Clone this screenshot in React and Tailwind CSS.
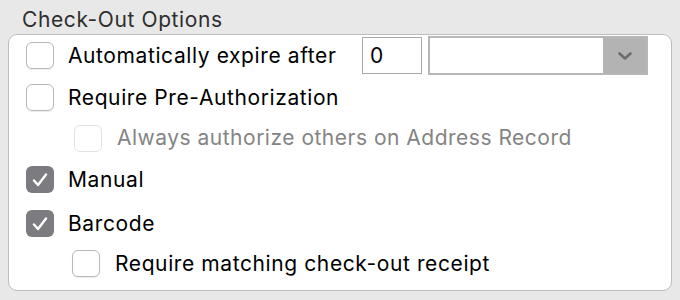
import React from "react";

function Box({ checked = false, disabled = false }) {
  if (checked) {
    return (
      <div className="w-[28px] h-[27px] shrink-0 rounded-[6px] bg-[#7c7c80] flex items-center justify-center">
        <svg width="16" height="14" viewBox="0 0 16 14" fill="none">
          <path d="M2 7.5 L6 12 L14 1.5" stroke="#ffffff" strokeWidth="2.4" strokeLinecap="round" strokeLinejoin="round" />
        </svg>
      </div>
    );
  }
  return (
    <div
      className={
        disabled
          ? "w-[28px] h-[27px] shrink-0 rounded-[6px] bg-white border border-[#e2e2e2]"
          : "w-[28px] h-[27px] shrink-0 rounded-[6px] bg-white border border-[#b9b9b9] shadow-[0_1px_1px_rgba(0,0,0,0.08)]"
      }
    />
  );
}

export default function App() {
  return (
    <div className="w-[680px] h-[300px] bg-[#e8e8e8] text-[21px] tracking-[0.6px] font-['Inter',sans-serif]">
      <div className="h-[34px] pl-[22px] pt-[8px] text-[#2e2e2e] leading-[24px]">Check-Out Options</div>

      <div className="mx-[8px] w-[664px] h-[257px] bg-white border border-[#bdbdbd] rounded-[9px] flex flex-col">
        {/* Automatically expire */}
        <div className="h-[41px] flex items-center pl-[17px]">
          <Box />
          <span className="ml-[14px] text-black">Automatically expire after</span>
          <div className="ml-auto mr-[23px] flex items-center gap-[6px]">
            <div className="w-[60px] h-[37px] border border-[#a8a8a8] flex items-center pl-[7px] text-black">0</div>
            <div className="w-[220px] h-[39px] border-2 border-[#b7b7b7] flex">
              <div className="flex-1 bg-white" />
              <div className="w-[43px] bg-[#b3b3b3] flex items-center justify-center">
                <svg width="16" height="10" viewBox="0 0 16 10" fill="none">
                  <path d="M2.5 2.5 L8 7.5 L13.5 2.5" stroke="#6d6d6d" strokeWidth="2.6" strokeLinecap="round" strokeLinejoin="round" />
                </svg>
              </div>
            </div>
          </div>
        </div>

        {/* Require Pre-Authorization */}
        <div className="h-[43px] flex items-center pl-[17px]">
          <Box />
          <span className="ml-[14px] text-black">Require Pre-Authorization</span>
        </div>

        {/* Always authorize others */}
        <div className="h-[38px] flex items-center pl-[65px]">
          <Box disabled />
          <span className="ml-[15px] text-[#848484] tracking-[0.5px]">Always authorize others on Address Record</span>
        </div>

        {/* Manual */}
        <div className="h-[45px] flex items-center pl-[17px]">
          <Box checked />
          <span className="ml-[14px] text-black">Manual</span>
        </div>

        {/* Barcode */}
        <div className="h-[43px] flex items-center pl-[17px]">
          <Box checked />
          <span className="ml-[14px] text-black">Barcode</span>
        </div>

        {/* Require matching receipt */}
        <div className="h-[37px] flex items-center pl-[63px]">
          <Box />
          <span className="ml-[15px] text-black">Require matching check-out receipt</span>
        </div>
      </div>
    </div>
  );
}
